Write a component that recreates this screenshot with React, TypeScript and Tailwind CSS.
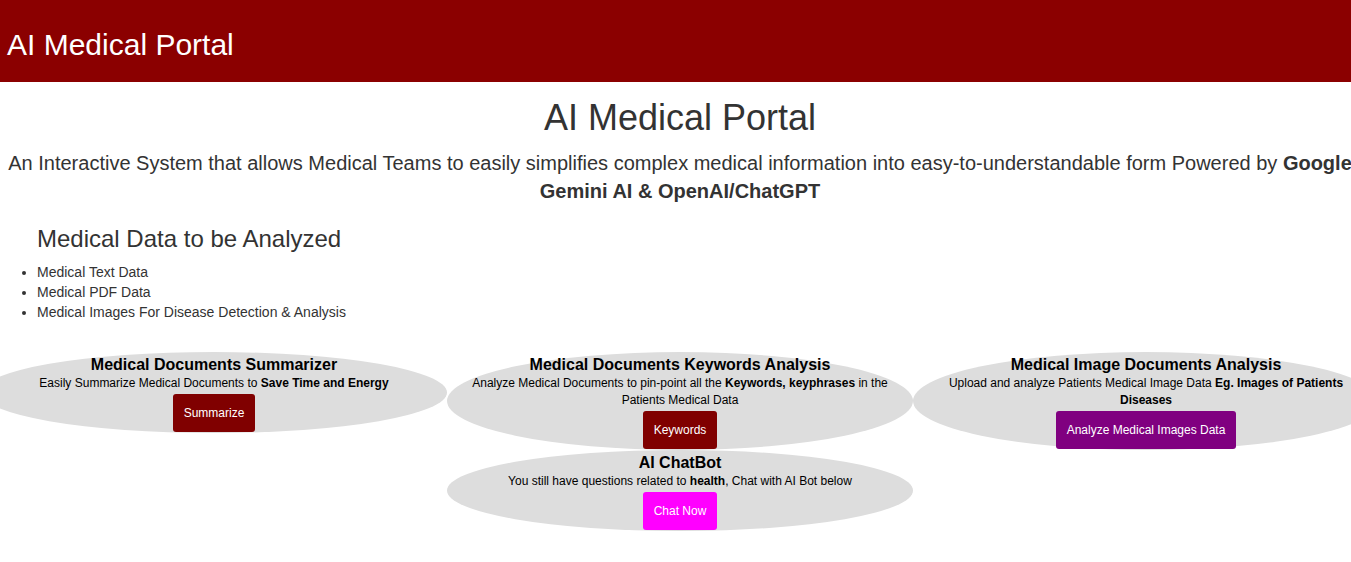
import React from "react";

interface CardProps {
  title: string;
  children: React.ReactNode;
  button: string;
  buttonClass: string;
}

const Card: React.FC<CardProps> = ({ title, children, button, buttonClass }) => {
  return (
    <div className="flex w-[466px] shrink-0 flex-col items-center rounded-[50%] bg-[#dddddd] px-[15px] pt-[3px] pb-[1px] text-center text-black">
      <h4 className="text-[16px] leading-[19px] font-bold">{title}</h4>
      <p className="mt-[1px] text-[12px] leading-[17px]">{children}</p>
      <button
        className={`mt-[2px] rounded-[3px] px-[11px] py-[10px] text-[12px] leading-[18px] text-white ${buttonClass}`}
      >
        {button}
      </button>
    </div>
  );
};

export default function App() {
  return (
    <div className="w-full overflow-x-hidden bg-white font-['Liberation_Sans',Arial,sans-serif] text-[#333333]">
      <div className="w-[1360px]">
        <header className="flex h-[82px] items-center bg-[#8b0000] px-[7px]">
          <span className="pt-[8px] text-[30px] leading-[34px] text-white">AI Medical Portal</span>
        </header>

        <h1 className="mt-[16px] text-center text-[36px] leading-[40px]">AI Medical Portal</h1>
        <p className="mt-[11px] text-center text-[20px] leading-[28px]">
          An Interactive System that allows Medical Teams to easily simplifies complex medical information into
          easy-to-understandable form Powered by <b>Google</b> <b>Gemini AI &amp; OpenAI/ChatGPT</b>
        </p>

        <h3 className="mt-[20px] pl-[37px] text-[24px] leading-[28px]">Medical Data to be Analyzed</h3>
        <ul className="mt-[9px] list-disc pl-[37px] text-[14px] leading-[20px]">
          <li>Medical Text Data</li>
          <li>Medical PDF Data</li>
          <li>Medical Images For Disease Detection &amp; Analysis</li>
        </ul>

        <div className="mt-[30px] flex items-start justify-center">
          <Card title="Medical Documents Summarizer" button="Summarize" buttonClass="bg-[#800000]">
            Easily Summarize Medical Documents to <b>Save Time and Energy</b>
          </Card>
          <Card title="Medical Documents Keywords Analysis" button="Keywords" buttonClass="bg-[#800000]">
            Analyze Medical Documents to pin-point all the <b>Keywords, keyphrases</b> in the Patients Medical Data
          </Card>
          <Card title="Medical Image Documents Analysis" button="Analyze Medical Images Data" buttonClass="bg-[#800080]">
            Upload and analyze Patients Medical Image Data <b>Eg. Images of Patients Diseases</b>
          </Card>
        </div>
        <div className="flex justify-center pb-[30px]">
          <Card title="AI ChatBot" button="Chat Now" buttonClass="bg-[#ff00ff]">
            You still have questions related to <b>health</b>, Chat with AI Bot below
          </Card>
        </div>
      </div>
    </div>
  );
}
